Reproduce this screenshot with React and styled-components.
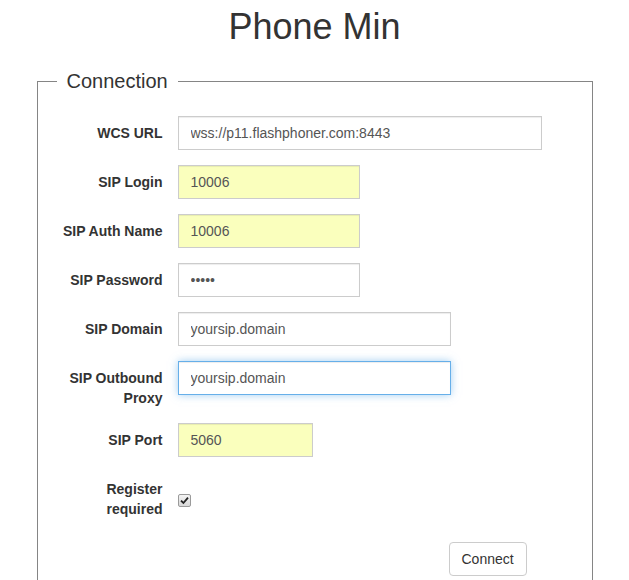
import React from 'react';
import styled, { createGlobalStyle } from 'styled-components';

const GlobalStyle = createGlobalStyle`
  html, body {
    margin: 0;
    padding: 0;
    background: #fff;
  }
  body {
    font-family: "Liberation Sans", Arial, Helvetica, sans-serif;
    font-size: 14px;
    line-height: 20px;
    color: #333;
  }
  * {
    box-sizing: border-box;
  }
`;

const Page = styled.div`
  width: 556px;
  margin: 0 auto;
`;

const Title = styled.h1`
  margin: 7px 0 0;
  font-size: 36px;
  line-height: 40px;
  font-weight: normal;
  text-align: center;
  color: #333;
`;

const Fieldset = styled.fieldset`
  margin: 23px 0 0;
  padding: 24px 0 20px;
  border: 1px solid #858585;
  min-width: 0;
`;

const Legend = styled.legend`
  margin-left: 19px;
  padding: 0 10px;
  font-size: 20px;
  line-height: 22px;
  color: #333;
`;

const Row = styled.div`
  display: grid;
  grid-template-columns: 125px 1fr;
  column-gap: 15px;
  align-items: start;
  margin-bottom: ${(p) => (p.$last ? 0 : 15)}px;
`;

const Label = styled.label`
  padding: 7px 0 0 15px;
  text-align: right;
  font-weight: bold;
  line-height: 20px;
  color: #333;
`;

const Input = styled.input`
  display: block;
  width: ${(p) => p.$w}px;
  height: 34px;
  padding: 6px 12px;
  font-family: inherit;
  font-size: 14px;
  line-height: 20px;
  color: #555;
  background: ${(p) => (p.$filled ? '#faffbd' : '#fff')};
  border: 1px solid ${(p) => (p.$focused ? '#66afe9' : '#ccc')};
  border-radius: 0;
  box-shadow: ${(p) =>
    p.$focused
      ? 'inset 0 1px 1px rgba(0,0,0,.075), 0 0 8px rgba(102,175,233,.6)'
      : 'inset 0 1px 1px rgba(0,0,0,.075)'};
  outline: none;
  margin: 0;
`;

const CheckBox = styled.span`
  display: inline-flex;
  align-items: center;
  justify-content: center;
  width: 13px;
  height: 13px;
  margin-top: 22px;
  border: 1px solid #9a9a9a;
  border-radius: 2px;
  background: linear-gradient(#f4f4f4, #d8d8d8);
`;

const ButtonRow = styled.div`
  display: flex;
  padding-left: 411px;
  margin-top: 23px;
`;

const Button = styled.button`
  height: 34px;
  padding: 6px 12px;
  font-family: inherit;
  font-size: 14px;
  line-height: 20px;
  color: #333;
  background: #fff;
  border: 1px solid #ccc;
  border-radius: 4px;
  cursor: pointer;
`;

const fields = [
  { label: 'WCS URL', value: 'wss://p11.flashphoner.com:8443', w: 364 },
  { label: 'SIP Login', value: '10006', w: 182, filled: true },
  { label: 'SIP Auth Name', value: '10006', w: 182, filled: true },
  { label: 'SIP Password', value: '12345', w: 182, type: 'password' },
  { label: 'SIP Domain', value: 'yoursip.domain', w: 273 },
  { label: 'SIP Outbound Proxy', value: 'yoursip.domain', w: 273, focused: true },
  { label: 'SIP Port', value: '5060', w: 135, filled: true },
];

export default function App() {
  return (
    <>
      <GlobalStyle />
      <Page>
        <Title>Phone Min</Title>
        <Fieldset>
          <Legend>Connection</Legend>
          {fields.map((f) => (
            <Row key={f.label}>
              <Label>{f.label}</Label>
              <Input
                type={f.type || 'text'}
                defaultValue={f.value}
                $w={f.w}
                $filled={f.filled}
                $focused={f.focused}
              />
            </Row>
          ))}
          <Row $last>
            <Label>Register required</Label>
            <div>
              <CheckBox>
                <svg width="9" height="9" viewBox="0 0 9 9">
                  <path d="M1 4.6 L3.4 7 L8 1.6" fill="none" stroke="#222" strokeWidth="1.8" />
                </svg>
              </CheckBox>
            </div>
          </Row>
          <ButtonRow>
            <Button>Connect</Button>
          </ButtonRow>
        </Fieldset>
      </Page>
    </>
  );
}
